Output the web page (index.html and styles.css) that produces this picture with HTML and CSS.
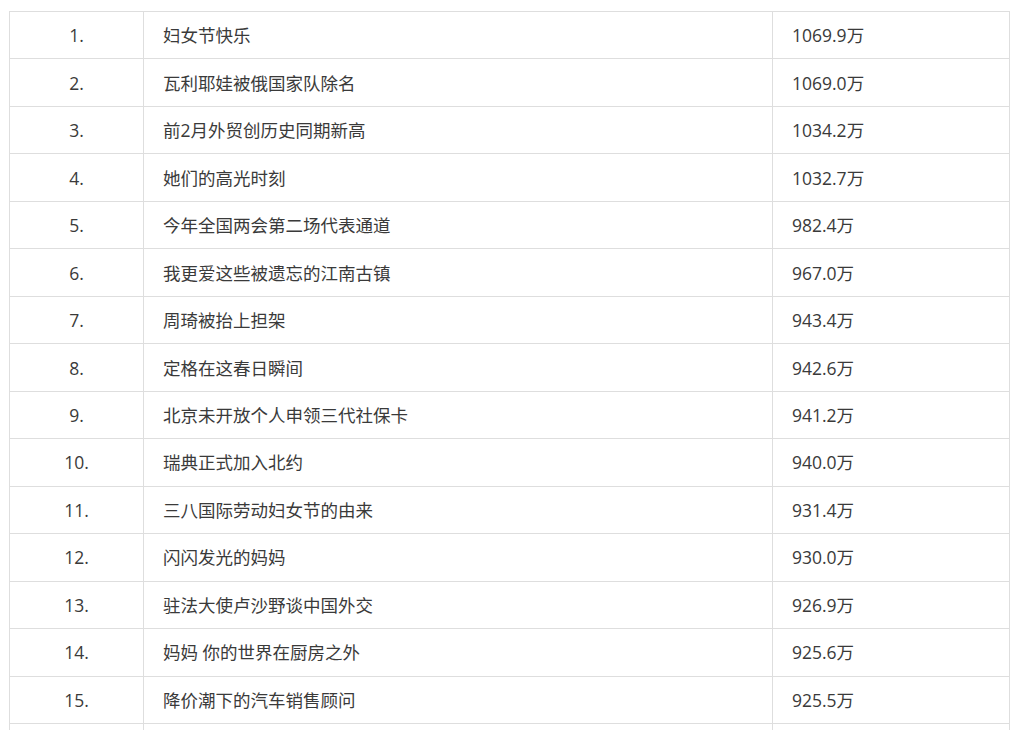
FILE: index.html
```html
<!DOCTYPE html>
<html lang="zh-CN">
<head>
<meta charset="utf-8">
<title>热搜榜</title>
<link rel="stylesheet" href="styles.css">
</head>
<body>
<table class="rank">
<colgroup>
<col class="c-num">
<col class="c-title">
<col class="c-hot">
</colgroup>
<tbody>
<tr><td class="num">1.</td><td class="title">妇女节快乐</td><td class="hot">1069.9万</td></tr>
<tr><td class="num">2.</td><td class="title">瓦利耶娃被俄国家队除名</td><td class="hot">1069.0万</td></tr>
<tr><td class="num">3.</td><td class="title">前2月外贸创历史同期新高</td><td class="hot">1034.2万</td></tr>
<tr><td class="num">4.</td><td class="title">她们的高光时刻</td><td class="hot">1032.7万</td></tr>
<tr><td class="num">5.</td><td class="title">今年全国两会第二场代表通道</td><td class="hot">982.4万</td></tr>
<tr><td class="num">6.</td><td class="title">我更爱这些被遗忘的江南古镇</td><td class="hot">967.0万</td></tr>
<tr><td class="num">7.</td><td class="title">周琦被抬上担架</td><td class="hot">943.4万</td></tr>
<tr><td class="num">8.</td><td class="title">定格在这春日瞬间</td><td class="hot">942.6万</td></tr>
<tr><td class="num">9.</td><td class="title">北京未开放个人申领三代社保卡</td><td class="hot">941.2万</td></tr>
<tr><td class="num">10.</td><td class="title">瑞典正式加入北约</td><td class="hot">940.0万</td></tr>
<tr><td class="num">11.</td><td class="title">三八国际劳动妇女节的由来</td><td class="hot">931.4万</td></tr>
<tr><td class="num">12.</td><td class="title">闪闪发光的妈妈</td><td class="hot">930.0万</td></tr>
<tr><td class="num">13.</td><td class="title">驻法大使卢沙野谈中国外交</td><td class="hot">926.9万</td></tr>
<tr><td class="num">14.</td><td class="title">妈妈 你的世界在厨房之外</td><td class="hot">925.6万</td></tr>
<tr><td class="num">15.</td><td class="title">降价潮下的汽车销售顾问</td><td class="hot">925.5万</td></tr>
<tr><td class="num"></td><td class="title"></td><td class="hot"></td></tr>
</tbody>
</table>
</body>
</html>
```
FILE: styles.css
```css
html, body {
  margin: 0;
  padding: 0;
  background: #fff;
}

body {
  font-family: "Open Sans", "Noto Sans CJK SC", sans-serif;
  font-size: 17.5px;
  color: #3a3a3a;
}

.rank {
  margin: 11px 0 0 9px;
  width: 1000px;
  border-collapse: collapse;
  table-layout: fixed;
}

.c-num { width: 134px; }
.c-title { width: 629px; }
.c-hot { width: 237px; }

.rank td {
  border: 1px solid #dedede;
  height: 47.47px;
  padding: 0 18px 0 19px;
  box-sizing: border-box;
  vertical-align: middle;
  line-height: 24px;
  white-space: nowrap;
}

.rank td.num {
  text-align: center;
  padding: 0;
}

.rank td.title,
.rank td.hot {
  text-align: left;
}
```
